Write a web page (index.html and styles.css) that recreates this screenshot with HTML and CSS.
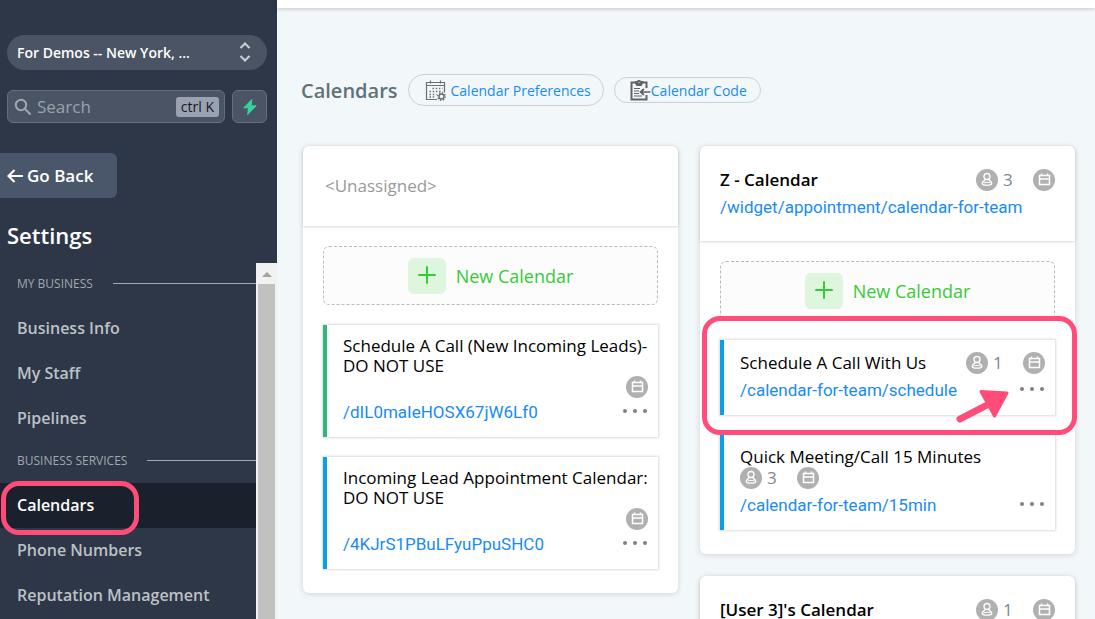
FILE: index.html
```html
<!DOCTYPE html>
<html lang="en">
<head>
  <meta charset="UTF-8" />
  <meta name="viewport" content="width=device-width, initial-scale=1.0" />
  <title>Calendars</title>
  <link rel="stylesheet" href="styles.css">
</head>
<body>
  <!-- shared icons -->
  <svg class="sprite" aria-hidden="true">
    <symbol id="icon-user" viewBox="0 0 22 22">
      <circle cx="11" cy="11" r="11" fill="#b0b0b0" />
      <circle cx="11" cy="7.500" r="3" fill="none" stroke="#fff" stroke-width="1.300" />
      <path d="M9.500 10.200c-.3 1.600-3.300 2-3.300 4.200 0 1.200 2 1.700 4.800 1.700s4.800-.5 4.800-1.700c0-2.200-3-2.600-3.300-4.200" fill="none" stroke="#fff" stroke-width="1.300" />
      <path d="M7.500 14c2-.8 5-.8 7 0" fill="none" stroke="#fff" />
    </symbol>
    <symbol id="icon-calendar" viewBox="0 0 22 22">
      <circle cx="11" cy="11" r="11" fill="#b0b0b0" />
      <path d="M6.500 6.500h10v9h-10zM6.500 10h10M8.500 4.500v2M14.500 4.500v2" fill="none" stroke="#fff" stroke-width="1.500" />
    </symbol>
    <symbol id="icon-dots" viewBox="0 0 26 6">
      <circle cx="3" cy="3" r="2" /><circle cx="13" cy="3" r="2" /><circle cx="23" cy="3" r="2" />
    </symbol>
    <symbol id="icon-plus" viewBox="0 0 18 18">
      <path d="M9 1v16M1 9h16" fill="none" stroke="#37ca37" stroke-width="2" stroke-linecap="round" />
    </symbol>
  </svg>

  <aside class="sidebar">
    <div class="account">
      <select aria-label="Account">
        <option>For Demos -- New York, ...</option>
      </select>
      <svg class="account-arrows" viewBox="0 0 12 20"><path d="M1.500 6 6 1.500 10.500 6M1.500 14 6 18.500 10.500 14" fill="none" stroke="#cbd0d6" stroke-width="2" /></svg>
    </div>
    <div class="search-row">
      <label class="search">
        <svg viewBox="0 0 18 18"><circle cx="7" cy="7" r="5.200" fill="none" stroke="#a0a7b3" stroke-width="2" /><path d="M11 11l5.500 5.500" stroke="#a0a7b3" stroke-width="2" /></svg>
        <input type="text" placeholder="Search" aria-label="Search">
        <kbd>ctrl K</kbd>
      </label>
      <button class="quick" aria-label="Quick actions">
        <svg viewBox="0 0 14 16"><path d="M8.800.5.800 8.800h4.700L4.700 15.500l8.500-8.700H8.200z" fill="#34d399" stroke="#34d399" stroke-linejoin="round" /></svg>
      </button>
    </div>
    <button class="back">
      <svg viewBox="0 0 16 14"><path d="M7.500 1 1.500 7l6 6M2 7h14" fill="none" stroke="#fff" stroke-width="2.200" /></svg>
      Go Back
    </button>
    <h1>Settings</h1>
    <div class="menu">
      <nav>
        <h2>MY BUSINESS</h2>
        <a href="#">Business Info</a>
        <a href="#">My Staff</a>
        <a href="#">Pipelines</a>
        <h2>BUSINESS SERVICES</h2>
        <a href="#" class="active">Calendars<span class="highlight"></span></a>
        <a href="#">Phone Numbers</a>
        <a href="#">Reputation Management</a>
      </nav>
      <div class="scrollbar">
        <svg viewBox="0 0 10 5"><path d="M5 0l5 5H0z" fill="#a3a3a3" /></svg>
        <div class="thumb"></div>
      </div>
    </div>
  </aside>

  <main>
    <div class="topbar"></div>
    <div class="page-head">
      <h2>Calendars</h2>
      <a href="#" class="pill pill-large">
        <svg viewBox="0 0 21 21" fill="none" stroke="#6b6f73">
          <path d="M12 19.500H1.500v-17h18v10M1.500 5.500h18M5.500.5v3M15.500.5v3" stroke-width="1.200" />
          <path d="M7.500 8.500h10M4.500 11.500h13M4.500 14.500h7M4.500 17h6" stroke-width="1.500" stroke-dasharray="1.500 1.700" />
          <circle cx="16.500" cy="16.500" r="2.500" stroke-width="1.400" />
          <circle cx="16.500" cy="16.500" r="3.800" stroke-width="1.400" stroke-dasharray="1.400 1.580" />
        </svg>
        Calendar Preferences
      </a>
      <a href="#" class="pill">
        <svg viewBox="0 0 21 21" fill="none" stroke="#606468">
          <path d="M16.500 8V2.500H1.500v17h15V15" stroke-width="2" />
          <path d="M5 1.500h2C7 .2 11 .2 11 1.500h2l-1.500 4h-5z" fill="#606468" />
          <path d="M4 8.500h6M4 11h5M4 13.500h5M4 16h8" stroke-width="1.200" />
          <path d="M20.500 12H11M14 9l-3.500 3 3.500 3" stroke-width="1.700" />
          <circle cx="9" cy="2.500" r=".6" fill="#fff" stroke="none" />
        </svg>Calendar Code
      </a>
    </div>

    <div class="columns">
      <div class="column">
        <section class="card">
          <header class="unassigned">&lt;Unassigned&gt;</header>
          <div class="card-body">
            <button class="new"><span><svg><use href="#icon-plus" /></svg></span>New Calendar</button>
            <article class="item green">
              <div class="row end">
                <h4>Schedule A Call (New Incoming Leads)-DO NOT USE</h4>
                <div class="badges"><svg><use href="#icon-calendar" /></svg></div>
              </div>
              <div class="link-row">
                <a href="#">/dIL0maIeHOSX67jW6Lf0</a>
                <button class="more" aria-label="More"><svg><use href="#icon-dots" /></svg></button>
              </div>
            </article>
            <article class="item">
              <div class="row end">
                <h4>Incoming Lead Appointment Calendar: DO NOT USE</h4>
                <div class="badges"><svg><use href="#icon-calendar" /></svg></div>
              </div>
              <div class="link-row">
                <a href="#">/4KJrS1PBuLFyuPpuSHC0</a>
                <button class="more" aria-label="More"><svg><use href="#icon-dots" /></svg></button>
              </div>
            </article>
          </div>
        </section>
      </div>

      <div class="column">
        <section class="card">
          <header>
            <div class="row">
              <h3>Z - Calendar</h3>
              <div class="badges"><svg><use href="#icon-user" /></svg><span>3</span><svg><use href="#icon-calendar" /></svg></div>
            </div>
            <div class="link-row"><a href="#">/widget/appointment/calendar-for-team</a></div>
          </header>
          <div class="card-body">
            <button class="new"><span><svg><use href="#icon-plus" /></svg></span>New Calendar</button>
            <article class="item">
              <div class="row">
                <h4>Schedule A Call With Us</h4>
                <div class="badges"><svg><use href="#icon-user" /></svg><span>1</span><svg><use href="#icon-calendar" /></svg></div>
              </div>
              <div class="link-row">
                <a href="#">/calendar-for-team/schedule</a>
                <button class="more" aria-label="More"><svg><use href="#icon-dots" /></svg></button>
              </div>
              <span class="highlight"></span>
              <svg class="pointer" viewBox="0 0 54 34"><path d="M4 30 34 14.500" stroke="#ff4c78" stroke-width="7" stroke-linecap="round" /><path d="M25 2.500 51 4 38.500 27z" fill="#ff4c78" stroke="#ff4c78" stroke-width="3" stroke-linejoin="round" /></svg>
            </article>
            <article class="item">
              <div class="row">
                <h4>Quick Meeting/Call 15 Minutes</h4>
                <div class="badges"><svg><use href="#icon-user" /></svg><span>3</span><svg><use href="#icon-calendar" /></svg></div>
              </div>
              <div class="link-row">
                <a href="#">/calendar-for-team/15min</a>
                <button class="more" aria-label="More"><svg><use href="#icon-dots" /></svg></button>
              </div>
            </article>
          </div>
        </section>
        <section class="card">
          <header>
            <div class="row">
              <h3>[User 3]'s Calendar</h3>
              <div class="badges"><svg><use href="#icon-user" /></svg><span>1</span><svg><use href="#icon-calendar" /></svg></div>
            </div>
          </header>
        </section>
      </div>
    </div>
  </main>
</body>
</html>
```
FILE: styles.css
```css
* {
  box-sizing: border-box;
}
body {
  margin: 0;
  display: flex;
  height: 100vh;
  overflow: hidden;
  background: #f2f7fa;
  color: #000;
  font-family: "Open Sans", "Noto Sans", sans-serif;
}
h1, h2, h3, h4 {
  margin: 0;
}
a {
  color: #188bf6;
  text-decoration: none;
}
button, input, select {
  font-family: inherit;
  border: none;
  padding: 0;
}
button {
  cursor: pointer;
}
svg {
  display: block;
  flex-shrink: 0;
}
.sprite {
  position: absolute;
  width: 0;
  height: 0;
}

/* sidebar */
.sidebar {
  width: 277px;
  flex-shrink: 0;
  display: flex;
  flex-direction: column;
  padding-top: 35px;
  background: #2d3748;
  color: #fff;
}
.account {
  position: relative;
  margin: 0 10px 20px 7px;
}
.account select {
  display: block;
  width: 100%;
  height: 35px;
  padding: 0 40px 0 10px;
  border-radius: 18px;
  appearance: none;
  background: #4a5464;
  color: #fff;
  font-size: 14px;
  font-weight: 600;
}
.account-arrows {
  position: absolute;
  right: 16px;
  top: 7px;
  width: 12px;
  height: 20px;
}
.search-row {
  display: flex;
  gap: 7px;
  margin: 0 10px 30px 7px;
}
.search {
  flex: 1;
  min-width: 0;
  display: flex;
  align-items: center;
  height: 33px;
  padding: 0 5px 0 6px;
  border: 1px solid #667080;
  border-radius: 6px;
  background: #4a5464;
}
.search svg {
  width: 18px;
  height: 18px;
  margin-right: 5px;
}
.search input {
  flex: 1;
  width: 0;
  min-width: 0;
  background: none;
  color: #fff;
  font-size: 17px;
}
.search input::placeholder {
  color: #9aa2af;
}
.search kbd {
  flex-shrink: 0;
  padding: 0 5px;
  border-radius: 3px;
  background: #9aa2b1;
  color: #15181d;
  font-family: inherit;
  font-size: 14px;
  line-height: 20px;
}
.quick {
  display: flex;
  align-items: center;
  justify-content: center;
  width: 35px;
  flex-shrink: 0;
  border: 1px solid #667080;
  border-radius: 6px;
  background: #4a5464;
}
.quick svg {
  width: 14px;
  height: 16px;
}
.back {
  display: flex;
  align-items: center;
  align-self: flex-start;
  gap: 4px;
  width: 117px;
  height: 45px;
  padding-left: 7px;
  border-radius: 0 6px 6px 0;
  background: #4a576a;
  color: #fff;
  font-size: 17px;
  font-weight: 600;
}
.back svg {
  width: 16px;
  height: 14px;
}
.sidebar h1 {
  padding: 21px 7px 12px;
  font-size: 22px;
  font-weight: 600;
  line-height: 32px;
}
.menu {
  flex: 1;
  min-height: 0;
  display: flex;
}
.menu nav {
  flex: 1;
  padding-top: 1px;
}
.menu h2 {
  display: flex;
  align-items: center;
  gap: 20px;
  height: 42px;
  padding: 0 0 3px 17px;
  color: #a0a7b0;
  font-size: 12px;
  font-weight: 400;
}
.menu h2::after {
  content: "";
  flex: 1;
  height: 1px;
  background: #a0aab4;
}
.menu nav a {
  position: relative;
  display: block;
  padding-left: 17px;
  color: #bcc1c6;
  font-size: 16px;
  font-weight: 600;
  line-height: 45px;
}
.menu nav a.active {
  background: #1a202c;
  color: #fff;
}
.scrollbar {
  display: flex;
  flex-direction: column;
  align-items: center;
  width: 21px;
  padding-top: 9px;
  background: #f1f1f1;
}
.scrollbar svg {
  width: 10px;
  height: 5px;
  margin-bottom: 7px;
}
.thumb {
  flex: 1;
  width: 17px;
  background: #c1c1c1;
}

/* callout frames */
.highlight {
  position: absolute;
  z-index: 2;
  border: 5px solid #ff4c78;
  border-radius: 18px;
  pointer-events: none;
}
.menu .highlight {
  left: 1px;
  top: -2px;
  width: 138px;
  height: 54px;
}
.item .highlight {
  inset: -24px -22px -20px;
}
.pointer {
  position: absolute;
  right: 45px;
  top: 49px;
  width: 54px;
  height: 34px;
}

/* content */
main {
  flex: 1;
  min-width: 0;
}
.topbar {
  height: 8px;
  background: #fff;
  box-shadow: 0 1px 4px rgba(0, 0, 0, 0.2);
}
.page-head {
  display: flex;
  align-items: center;
  gap: 10px;
  padding: 66px 20px 40px 24px;
}
.page-head h2 {
  padding-top: 2px;
  color: #607179;
  font-size: 20px;
  font-weight: 600;
  line-height: 30px;
}
.pill {
  display: flex;
  align-items: center;
  height: 26px;
  padding: 0 13px 0 15px;
  border: 1px solid #ccd1d4;
  border-radius: 16px;
  font-size: 14px;
  white-space: nowrap;
}
.pill svg {
  width: 21px;
  height: 21px;
}
.pill-large {
  gap: 5px;
  height: 32px;
  padding: 0 12px 0 16px;
}
.columns {
  display: grid;
  grid-template-columns: 1fr 1fr;
  align-items: start;
  gap: 22px;
  padding: 0 20px 0 26px;
}
.column {
  display: flex;
  flex-direction: column;
  gap: 22px;
  min-width: 0;
}
.card {
  border-radius: 6px;
  background: #fff;
  box-shadow: 0 1px 6px rgba(0, 0, 0, 0.14);
}
.card header {
  padding: 23px 20px;
  border-radius: 6px 6px 0 0;
  box-shadow: 0 1px 3px rgba(0, 0, 0, 0.16);
}
.card header.unassigned {
  padding-left: 22px;
  color: #999;
  font-size: 17px;
  line-height: 34px;
}
.card-body {
  display: flex;
  flex-direction: column;
  gap: 20px;
  padding: 20px 20px 24px;
}
.new {
  display: flex;
  align-items: center;
  justify-content: center;
  gap: 10px;
  height: 59px;
  border: 1px dashed #bbb;
  border-radius: 6px;
  background: #fcfcfc;
  color: #37ca37;
  font-size: 18px;
}
.new span {
  padding: 8px 10px 10px;
  border-radius: 6px;
  background: #def5de;
}
.new svg {
  width: 18px;
  height: 18px;
}
.item {
  position: relative;
  padding: 12px 10px 14px 16px;
  border-left: 4px solid #0a9ee8;
  box-shadow: 0 0 2px 1px rgba(0, 0, 0, 0.14);
}
.item.green {
  border-left-color: #34b57c;
}
.row {
  display: flex;
  flex-wrap: wrap;
  align-items: center;
  justify-content: space-between;
}
.row.end {
  justify-content: flex-end;
  margin: -1px 0 -2px;
}
.row.end h4 {
  width: 100%;
}
h3 {
  font-size: 17px;
  font-weight: 600;
  line-height: 22px;
}
h4 {
  font-size: 17px;
  font-weight: 400;
  line-height: 20px;
}
.badges {
  display: flex;
  align-items: center;
  color: #7c878e;
  font-size: 17px;
  line-height: 22px;
}
.badges svg {
  width: 22px;
  height: 22px;
}
.badges span {
  width: 35px;
  padding-left: 5px;
}
.link-row {
  display: flex;
  align-items: center;
  justify-content: space-between;
  margin-top: 5px;
  font-family: Roboto, sans-serif;
  font-size: 17px;
  line-height: 22px;
}
.more {
  margin-bottom: 2px;
  background: none;
}
.more svg {
  width: 26px;
  height: 6px;
  fill: #808080;
}
```
